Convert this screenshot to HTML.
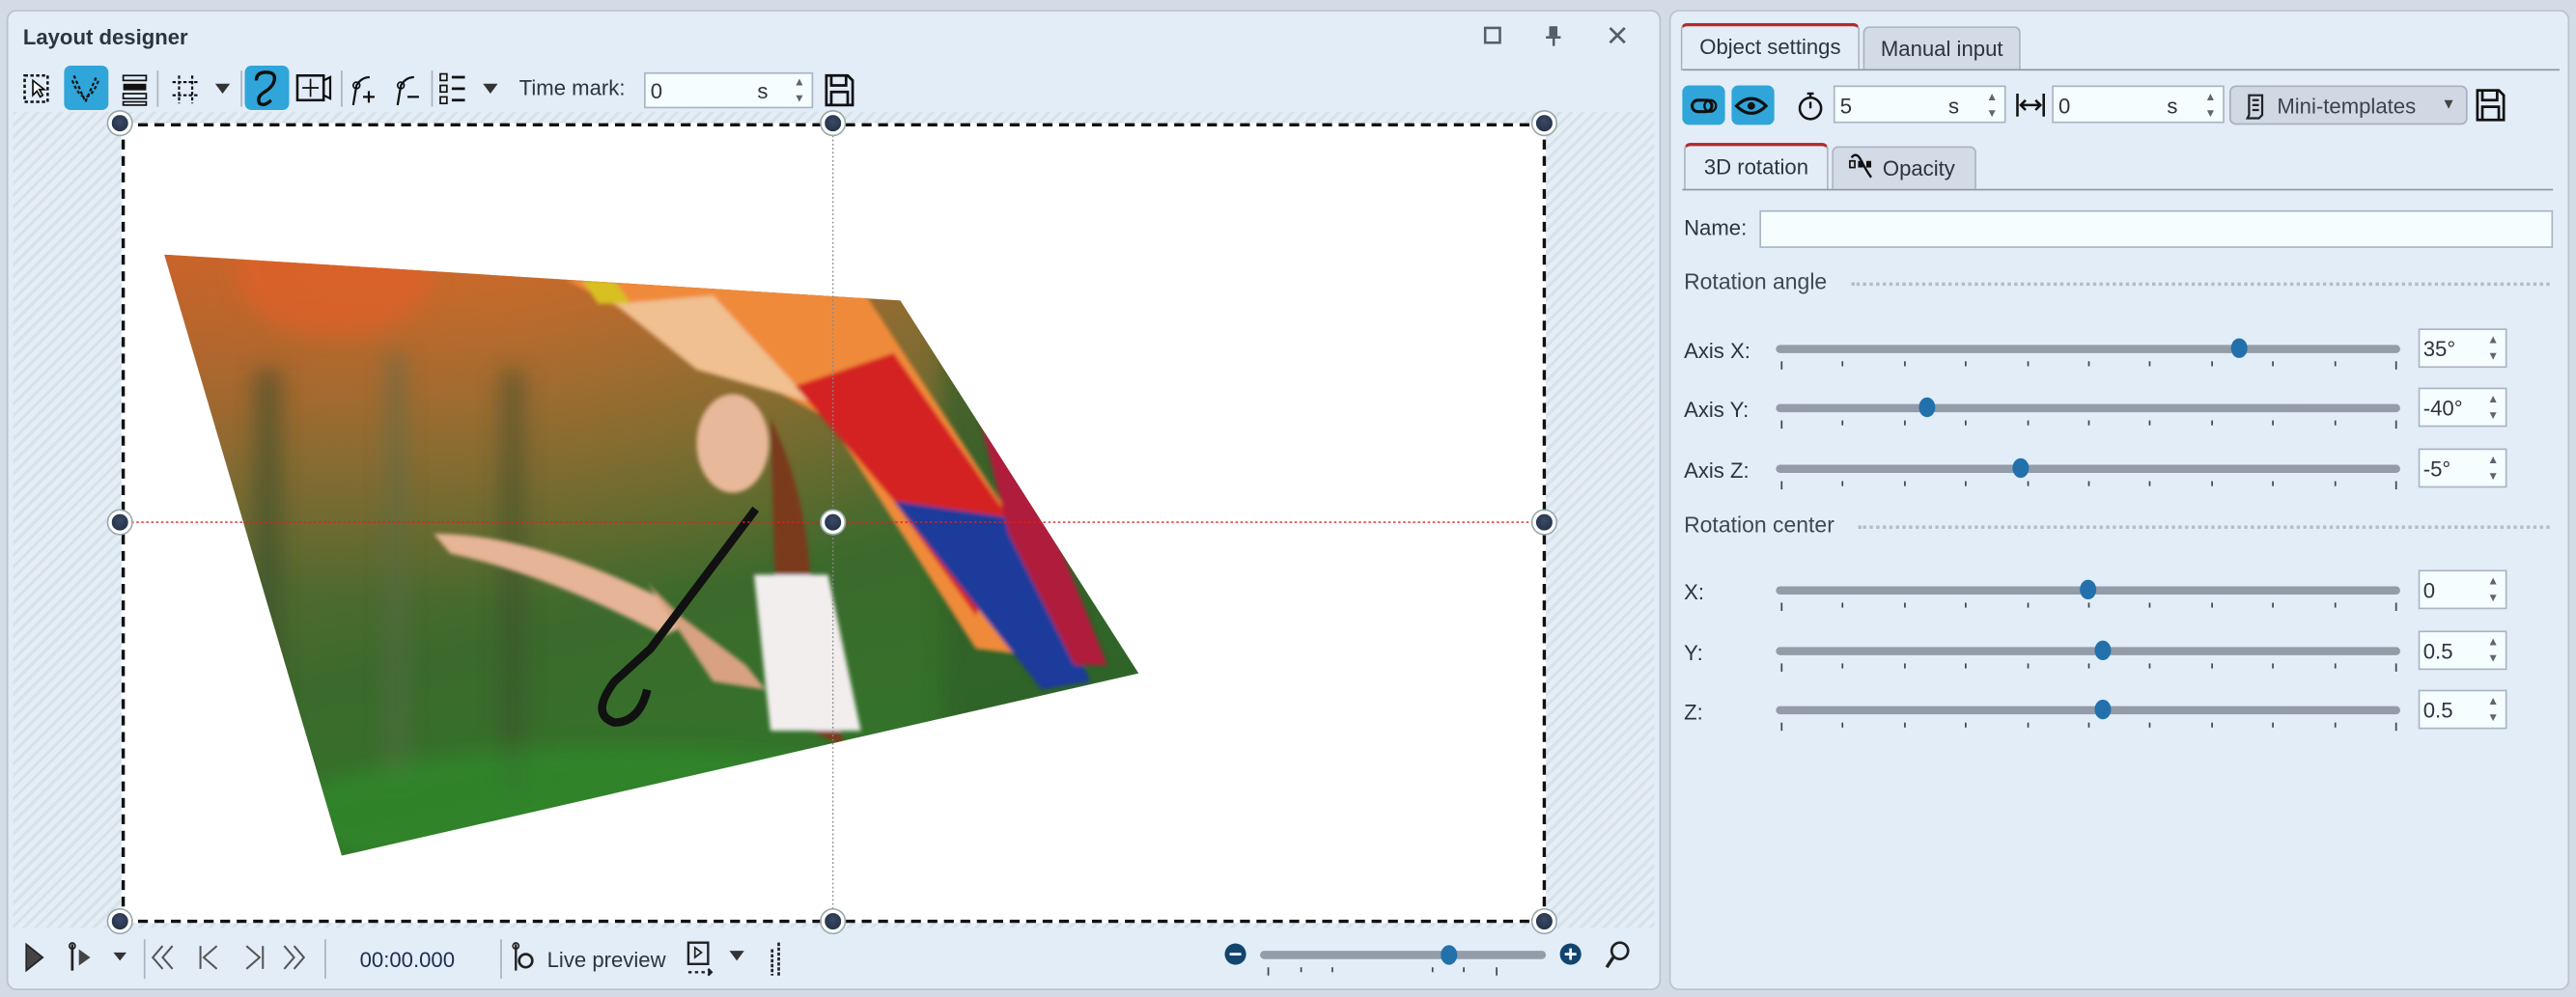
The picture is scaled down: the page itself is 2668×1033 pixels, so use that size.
<!DOCTYPE html>
<html><head><meta charset="utf-8"><style>
*{box-sizing:border-box;margin:0;padding:0}
html,body{width:2668px;height:1032px;overflow:hidden;background:#d2dbe6}
#w{position:absolute;left:0;top:0;width:1568px;height:607px;transform:scale(1.70153);transform-origin:0 0;font-family:"Liberation Sans",sans-serif;font-size:13px;color:#2b3440}
.a{position:absolute}
.panel{position:absolute;background:#e3edf8;border:1px solid #b9c3cf;border-radius:6px}
.inp{position:absolute;background:#f6fdff;border:1px solid #a9b5c3}
.blue{position:absolute;background:#30a5d9;border-radius:4px}
.lbl{position:absolute;font-size:13px;color:#2b3440}
.spin{position:absolute;right:4px;font-size:7px;color:#5d6570;line-height:10px}
.track{position:absolute;height:5px;background:#939ca8;border-radius:3px}
.thumb{position:absolute;width:10px;height:12px;border-radius:50%;background:#2271ad}
.tick{position:absolute;width:1px;height:4px;background:#444}
.h{position:absolute;width:14px;height:14px;border-radius:50%;background:radial-gradient(circle at 50% 40%,#3b4a66,#1f2a40);border:2px solid #fff;box-shadow:0 0 0 1px #9aa;}
.tab{position:absolute;border:1px solid #aab3bf;border-bottom:none;border-radius:4px 4px 0 0;background:#d2dbe6;text-align:center;line-height:26px}
.tab.on{background:#e3edf8;border-top:2px solid #b62a2a}
</style></head><body><div id="w">

<div class="panel" style="left:4px;top:6px;width:1007px;height:597px"></div>
<div class="a" style="left:14px;top:15px;font-weight:bold;font-size:13px">Layout designer</div>
<svg class="a" style="left:900px;top:14px" width="100" height="16"><rect x="4" y="3" width="9" height="9" fill="none" stroke="#555d68" stroke-width="1.5"/><rect x="43" y="2" width="5" height="6" fill="#555d68"/><rect x="41" y="8" width="9" height="1.5" fill="#555d68"/><rect x="45" y="9" width="1.5" height="5" fill="#555d68"/><path d="M80 3l9 9M89 3l-9 9" stroke="#555d68" stroke-width="1.6"/></svg>

<svg class="a" style="left:10px;top:40px" width="520" height="28">
<rect x="5" y="6" width="14" height="16" fill="none" stroke="#111" stroke-dasharray="2 1.5" stroke-width="1.5"/><path d="M10 9l0 9 2.5-2.5 2 3.5 1.5-1-2-3.5 3 0z" fill="#fff" stroke="#111"/>
<rect x="29" y="0" width="27" height="27" rx="4" fill="#30a5d9"/><path d="M35 6l7 16 7-16" fill="none" stroke="#111" stroke-width="1.3" stroke-dasharray="2 1.5"/><path d="M34 9q8 20 16 0" fill="none" stroke="#111" stroke-width="1.3" stroke-dasharray="2 1.5"/>
<rect x="65" y="6" width="14" height="3" fill="none" stroke="#111"/><rect x="65" y="11" width="14" height="4" fill="#111"/><rect x="65" y="17" width="14" height="3" fill="none" stroke="#111"/><rect x="65" y="22" width="14" height="2" fill="none" stroke="#111"/>
<line x1="86" y1="3" x2="86" y2="25" stroke="#aab4c0"/>
<path d="M95 10h16M95 18h16M99 6v17M107 6v17" stroke="#111" stroke-dasharray="2 1.3" stroke-width="1.3"/>
<path d="M121 11h9l-4.5 6z" fill="#333"/>
<line x1="137" y1="3" x2="137" y2="25" stroke="#aab4c0"/>
<rect x="139" y="0" width="27" height="27" rx="4" fill="#30a5d9"/><path d="M146 9q0-5 6-5t5 5q-1 4-6 7t-3 7q3 2 7-2" fill="none" stroke="#111" stroke-width="2"/>
<rect x="171" y="6" width="16" height="15" fill="none" stroke="#111" stroke-width="1.5"/><path d="M179 8v11M174 13.5h10" stroke="#111"/><path d="M187 9l4-2v13l-4-2" fill="none" stroke="#111" stroke-width="1.3"/>
<line x1="198" y1="3" x2="198" y2="25" stroke="#aab4c0"/>
<path d="M205 24l2-12q3-5 8-5" fill="none" stroke="#111" stroke-width="1.3"/><circle cx="207" cy="12" r="2" fill="none" stroke="#111"/><path d="M211 19h7M214.5 15.5v7" stroke="#111" stroke-width="1.3"/>
<path d="M232 24l2-12q3-5 8-5" fill="none" stroke="#111" stroke-width="1.3"/><circle cx="234" cy="12" r="2" fill="none" stroke="#111"/><path d="M238 19h7" stroke="#111" stroke-width="1.3"/>
<line x1="253" y1="3" x2="253" y2="25" stroke="#aab4c0"/>
<rect x="258" y="5" width="4" height="4" fill="none" stroke="#111"/><rect x="258" y="12" width="4" height="4" fill="none" stroke="#111"/><rect x="258" y="19" width="4" height="4" fill="none" stroke="#111"/><path d="M265 7h8M265 14h8M265 21h8" stroke="#111" stroke-width="1.6"/>
<path d="M284 11h9l-4.5 6z" fill="#333"/>
</svg>
<div class="lbl" style="left:316px;top:46px">Time mark:</div>
<div class="inp" style="left:392px;top:44px;width:103px;height:22px"><span class="a" style="left:3px;top:3px">0</span><span class="a" style="left:68px;top:3px">s</span><span class="spin" style="top:1px">▲<br>▼</span></div>
<svg class="a" style="left:501px;top:44px" width="20" height="22"><path d="M2 2h13l3 3v15H2z M5 2v6h9V2 M5 20v-8h10v8" fill="none" stroke="#111" stroke-width="1.6"/></svg>

<div class="a" style="left:8px;top:68px;width:999px;height:497px;background:repeating-linear-gradient(135deg,#d6e2ec 0 2px,#e6eef5 2px 5px)"></div>
<div class="a" style="left:74px;top:75px;width:867px;height:487px;background:#fff;border:2px dashed #111"></div>
<svg class="a" style="left:74px;top:75px" width="867" height="487">
<defs>
<linearGradient id="bg" x1="0" y1="0" x2="0.4" y2="1"><stop offset="0" stop-color="#c46a1e"/><stop offset="0.15" stop-color="#b8592a"/><stop offset="0.4" stop-color="#6c6a35"/><stop offset="0.65" stop-color="#3c6a2c"/><stop offset="1" stop-color="#2c7a2a"/></linearGradient>
<radialGradient id="glow" cx="0.25" cy="0.1" r="0.5"><stop offset="0" stop-color="#e0702a" stop-opacity=".8"/><stop offset="1" stop-color="#e0702a" stop-opacity="0"/></radialGradient>
<clipPath id="cp"><path d="M26 80L474 108L619 335L134 446z"/></clipPath>
<filter id="bl"><feGaussianBlur stdDeviation="6"/></filter>
<filter id="bl2"><feGaussianBlur stdDeviation="1.2"/></filter>
</defs>
<g clip-path="url(#cp)">
<rect width="867" height="487" fill="url(#bg)"/>
<rect width="867" height="487" fill="url(#glow)"/>
<g filter="url(#bl)">
<rect x="80" y="150" width="18" height="260" fill="#3a4a2a" opacity=".5"/>
<rect x="160" y="140" width="14" height="260" fill="#5a6a4a" opacity=".45"/>
<rect x="230" y="150" width="16" height="260" fill="#3a4a2a" opacity=".45"/>
<rect x="500" y="100" width="200" height="300" fill="#2f5a2a" opacity=".6"/>
<ellipse cx="130" cy="90" rx="60" ry="40" fill="#e0602a" opacity=".7"/>
<ellipse cx="300" cy="420" rx="200" ry="40" fill="#2f8a2a" opacity=".7"/>
</g>
<g filter="url(#bl2)">
<path d="M270 95L450 100L600 330L520 320L430 180Z" fill="#f08a3a"/>
<path d="M300 110L360 105L420 170L350 150Z" fill="#f0c090"/>
<path d="M410 160L470 140L540 240L520 300L470 230Z" fill="#d42020"/>
<path d="M470 230L540 240L590 340L560 345Z" fill="#1e3a9a"/>
<path d="M520 170L560 230L600 330L580 330L540 250Z" fill="#b01c3a"/>
<path d="M280 95L300 96L310 110L290 110z" fill="#d8c020"/>
<path d="M395 180Q420 230 420 300L440 380L400 360Z" fill="#7a3a1e"/>
<ellipse cx="372" cy="195" rx="22" ry="30" fill="#e8b89a"/>
<path d="M385 275L430 275L450 370L395 370Z" fill="#f2eeee"/>
<path d="M190 250Q250 250 330 290L345 305L330 312Q260 275 200 262Z" fill="#e6b496"/>
<path d="M320 280L340 300L380 330L392 345L360 340Z" fill="#d8a282"/>
</g>
<path d="M386 235L322 320L300 340Q285 360 300 365Q315 365 320 345" fill="none" stroke="#111" stroke-width="5"/>
</g>
<line x1="433" y1="0" x2="433" y2="487" stroke="#888" stroke-dasharray="1 1.5" stroke-width=".8"/>
<line x1="0" y1="243" x2="867" y2="243" stroke="#d22" stroke-dasharray="1.5 1.5" stroke-width=".8"/>
</svg>
<div class="h" style="left:66px;top:68px"></div><div class="h" style="left:500px;top:68px"></div><div class="h" style="left:933px;top:68px"></div>
<div class="h" style="left:66px;top:311px"></div><div class="h" style="left:500px;top:311px"></div><div class="h" style="left:933px;top:311px"></div>
<div class="h" style="left:66px;top:554px"></div><div class="h" style="left:500px;top:554px"></div><div class="h" style="left:933px;top:554px"></div>

<svg class="a" style="left:10px;top:570px" width="480" height="28">
<path d="M6 5l10 8-10 8z" fill="#444" stroke="#222"/>
<path d="M34 5v16" stroke="#222" stroke-width="1.6"/><circle cx="34" cy="6" r="1.8" fill="none" stroke="#222"/><path d="M38 8l7 5-7 5z" fill="#444"/>
<path d="M59 10h8l-4 5z" fill="#333"/>
<line x1="78" y1="2" x2="78" y2="26" stroke="#aab4c0"/>
<path d="M89 6l-6 7 6 7M95 6l-6 7 6 7" fill="none" stroke="#555" stroke-width="1.2"/>
<path d="M112 6v14M122 6l-8 7 8 7" fill="none" stroke="#555" stroke-width="1.2"/>
<path d="M140 6l8 7-8 7M150 6v14" fill="none" stroke="#555" stroke-width="1.2"/>
<path d="M163 6l6 7-6 7M169 6l6 7-6 7" fill="none" stroke="#555" stroke-width="1.2"/>
<line x1="188" y1="2" x2="188" y2="26" stroke="#aab4c0"/>
<line x1="295" y1="2" x2="295" y2="26" stroke="#aab4c0"/>
<path d="M304 5v16" stroke="#222" stroke-width="1.4"/><circle cx="304" cy="6" r="1.8" fill="none" stroke="#222"/><circle cx="310" cy="15" r="4" fill="none" stroke="#222" stroke-width="1.6"/>
<rect x="409" y="4" width="12" height="13" fill="none" stroke="#222" stroke-width="1.4"/><path d="M413 7l4 3-4 3z" fill="none" stroke="#222"/><path d="M409 22h2M413 22h2M417 22h2M421 20l2 2-2 2" stroke="#222" stroke-width="1.4"/>
<path d="M434 9h9l-4.5 6z" fill="#333"/>
<path d="M460 8v16M464 4v20" stroke="#222" stroke-width="1.6" stroke-dasharray="2 1"/>
</svg>
<div class="lbl" style="left:219px;top:577px;color:#1e2c52">00:00.000</div>
<div class="lbl" style="left:333px;top:577px">Live preview</div>
<svg class="a" style="left:742px;top:570px" width="255" height="30">
<circle cx="10" cy="11" r="6.5" fill="#12456e"/><path d="M6.5 11h7" stroke="#fff" stroke-width="1.6"/>
<rect x="25" y="9" width="174" height="5" rx="2.5" fill="#939ca8"/>
<ellipse cx="140" cy="11.5" rx="5" ry="6" fill="#2271ad"/>
<path d="M30 19v5M50 19v3M69 19v3M130 19v3M149 19v3M169 19v5" stroke="#444"/>
<circle cx="214" cy="11" r="6.5" fill="#12456e"/><path d="M210.5 11h7M214 7.5v7" stroke="#fff" stroke-width="1.6"/>
<circle cx="244" cy="9" r="5" fill="none" stroke="#222" stroke-width="1.6"/><path d="M240 13l-4 6" stroke="#222" stroke-width="2"/>
</svg>

<div class="panel" style="left:1016px;top:6px;width:548px;height:597px"></div>
<div class="tab on" style="left:1023px;top:14px;width:109px;height:29px">Object settings</div>
<div class="tab" style="left:1134px;top:16px;width:96px;height:26px">Manual input</div>
<div class="a" style="left:1024px;top:42px;width:534px;height:1px;background:#8f98a4"></div>

<div class="blue" style="left:1024px;top:52px;width:26px;height:24px"></div>
<div class="blue" style="left:1054px;top:52px;width:26px;height:24px"></div>
<svg class="a" style="left:1024px;top:52px" width="110" height="26">
<rect x="6" y="9" width="12" height="7" rx="3.5" fill="none" stroke="#111" stroke-width="1.8"/><circle cx="17" cy="12.5" r="3.5" fill="none" stroke="#111" stroke-width="1.4"/>
<path d="M33 12.5q9-9 18 0q-9 9-18 0z" fill="none" stroke="#111" stroke-width="1.8"/><circle cx="42" cy="12.5" r="2.3" fill="#111"/>
<circle cx="78" cy="14" r="6.5" fill="none" stroke="#111" stroke-width="1.5"/><path d="M78 10v4M76 5h4M78 5v2.5" stroke="#111" stroke-width="1.4"/>
</svg>
<div class="inp" style="left:1116px;top:52px;width:105px;height:23px"><span class="a" style="left:3px;top:4px">5</span><span class="a" style="left:69px;top:4px">s</span><span class="spin" style="top:2px">▲<br>▼</span></div>
<svg class="a" style="left:1225px;top:54px" width="22" height="20"><path d="M3 3v14M19 3v14M5 10h12M8 7l-3 3 3 3M14 7l3 3-3 3" fill="none" stroke="#111" stroke-width="1.5"/></svg>
<div class="inp" style="left:1249px;top:52px;width:105px;height:23px"><span class="a" style="left:3px;top:4px">0</span><span class="a" style="left:69px;top:4px">s</span><span class="spin" style="top:2px">▲<br>▼</span></div>
<div class="a" style="left:1357px;top:52px;width:145px;height:24px;background:#cfd8e3;border:1.5px solid #a8b1bd;border-radius:4px"><svg class="a" style="left:8px;top:4px" width="14" height="16"><path d="M3 1h8v12l-2 2H2l1-2z M5 4h4M5 7h4M5 10h4" fill="none" stroke="#222" stroke-width="1.3"/></svg><span class="a" style="left:28px;top:4px;color:#3a4350">Mini-templates</span><span class="a" style="left:128px;top:5px;font-size:9px;color:#444">▼</span></div>
<svg class="a" style="left:1506px;top:53px" width="20" height="22"><path d="M2 2h13l3 3v15H2z M5 2v6h9V2 M5 20v-8h10v8" fill="none" stroke="#111" stroke-width="1.6"/></svg>

<div class="tab on" style="left:1025px;top:87px;width:88px;height:29px">3D rotation</div>
<div class="tab" style="left:1115px;top:89px;width:88px;height:26px"><span style="padding-left:18px">Opacity</span></div>
<svg class="a" style="left:1124px;top:92px" width="20" height="20"><path d="M3 4q3-4 6 2t6 10" fill="none" stroke="#111" stroke-width="1.4"/><rect x="2" y="6" width="3" height="4" fill="none" stroke="#111"/><rect x="7" y="6" width="3" height="4" fill="#111"/><rect x="12" y="6" width="3" height="4" fill="#111"/></svg>
<div class="a" style="left:1024px;top:115px;width:530px;height:1px;background:#8f98a4"></div>

<div class="lbl" style="left:1025px;top:131px">Name:</div>
<div class="inp" style="left:1071px;top:128px;width:483px;height:23px"></div>

<div class="lbl" style="left:1025px;top:164px;font-size:13.5px;color:#3f4753">Rotation angle</div>
<div class="a" style="left:1127px;top:172px;width:425px;border-top:2px dotted #b3bcc7"></div>
<div class="lbl" style="left:1025px;top:312px;font-size:13.5px;color:#3f4753">Rotation center</div>
<div class="a" style="left:1131px;top:320px;width:421px;border-top:2px dotted #b3bcc7"></div>

<div id="sl"></div>
<script>
var rows=[["Axis X:",212,1363,"35°"],["Axis Y:",248,1173,"-40°"],["Axis Z:",285,1230,"-5°"],["X:",359,1271,"0"],["Y:",396,1280,"0.5"],["Z:",432,1280,"0.5"]];
var h="";
rows.forEach(function(r){var y=r[1];
h+='<div class="lbl" style="left:1025px;top:'+(y-6)+'px">'+r[0]+'</div>';
h+='<div class="track" style="left:1081px;top:'+(y-2)+'px;width:380px"></div>';
for(var i=0;i<11;i++){h+='<div class="tick" style="left:'+(1084+i*37.4)+'px;top:'+(y+8)+'px;height:'+((i==0||i==10)?5:3)+'px"></div>';}
h+='<div class="thumb" style="left:'+(r[2]-5)+'px;top:'+(y-6)+'px"></div>';
h+='<div class="inp" style="left:1472px;top:'+(y-12)+'px;width:54px;height:24px"><span class="a" style="left:2px;top:4px">'+r[3]+'</span><span class="spin" style="top:2px">▲<br>▼</span></div>';
});
document.getElementById("sl").innerHTML=h;
</script>
</div></body></html>
